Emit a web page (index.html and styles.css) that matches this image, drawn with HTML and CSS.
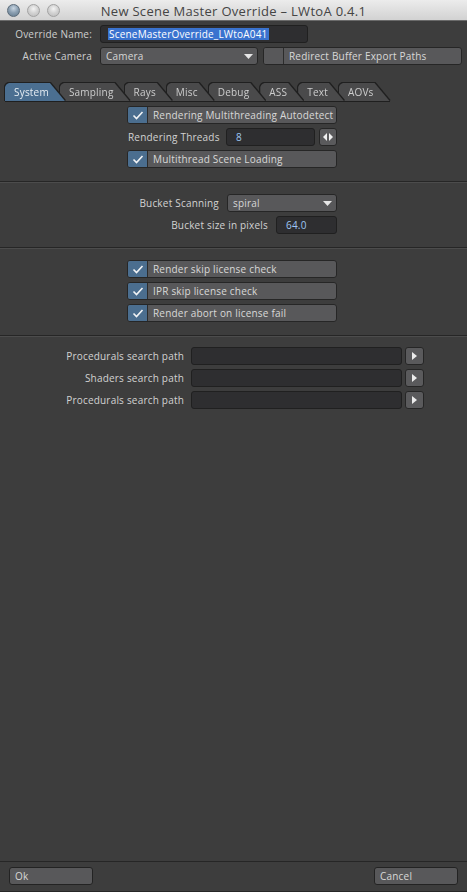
FILE: index.html
```html
<!DOCTYPE html>
<html>
<head>
<meta charset="utf-8">
<title>New Scene Master Override</title>
<link rel="stylesheet" href="styles.css">
</head>
<body>
<div class="window">
  <header class="titlebar">
    <div class="lights"><span class="light light-blue"></span><span class="light"></span><span class="light"></span></div>
    <div class="title">New Scene Master Override – LWtoA 0.4.1</div>
    <div class="title-pad"></div>
  </header>

  <div class="head-form">
    <div class="hrow">
      <span class="hlabel">Override Name:</span>
      <div class="field name-field"><span class="selection">SceneMasterOverride_LWtoA041</span></div>
    </div>
    <div class="hrow">
      <span class="hlabel">Active Camera</span>
      <div class="dropdown cam-drop"><span>Camera</span><svg class="darrow" width="9" height="5" viewBox="0 0 9 5"><path d="M0 0H9L4.5 5Z" fill="#e6e6e6"/></svg></div>
      <div class="check redirect"><span class="box box-off"></span><span class="ctext">Redirect Buffer Export Paths</span></div>
    </div>
  </div>

  <nav class="tabbar">
    <div class="tab tab-active t1"><span class="tab-shape">System</span></div>
    <div class="tab t2"><span class="tab-shape">Sampling</span></div>
    <div class="tab t3"><span class="tab-shape">Rays</span></div>
    <div class="tab t4"><span class="tab-shape">Misc</span></div>
    <div class="tab t5"><span class="tab-shape">Debug</span></div>
    <div class="tab t6"><span class="tab-shape">ASS</span></div>
    <div class="tab t7"><span class="tab-shape">Text</span></div>
    <div class="tab t8"><span class="tab-shape">AOVs</span></div>
  </nav>

  <section class="sec sec-sys">
    <div class="check wide"><span class="box"><svg width="12" height="9" viewBox="0 0 12 9"><path d="M1.5 4.5L4.5 7.5L10.5 1" fill="none" stroke="#f2f4f6" stroke-width="1.6"/></svg></span><span class="ctext">Rendering Multithreading Autodetect</span></div>
    <div class="threads">
      <span class="tlabel">Rendering Threads</span>
      <div class="field num-field">8</div>
      <div class="btn-small"><svg width="10" height="8" viewBox="0 0 10 8"><path d="M4 0V8L0 4Z M6 0V8L10 4Z" fill="#f0f0f0"/></svg></div>
    </div>
    <div class="check wide"><span class="box"><svg width="12" height="9" viewBox="0 0 12 9"><path d="M1.5 4.5L4.5 7.5L10.5 1" fill="none" stroke="#f2f4f6" stroke-width="1.6"/></svg></span><span class="ctext">Multithread Scene Loading</span></div>
  </section>
  <div class="sep"></div>

  <section class="sec sec-bucket">
    <div class="rrow">
      <span class="rlabel">Bucket Scanning</span>
      <div class="dropdown spiral-drop"><span>spiral</span><svg class="darrow" width="9" height="5" viewBox="0 0 9 5"><path d="M0 0H9L4.5 5Z" fill="#e6e6e6"/></svg></div>
    </div>
    <div class="rrow">
      <span class="rlabel">Bucket size in pixels</span>
      <div class="field bsize-field">64.0</div>
    </div>
  </section>
  <div class="sep"></div>

  <section class="sec sec-lic">
    <div class="check wide"><span class="box"><svg width="12" height="9" viewBox="0 0 12 9"><path d="M1.5 4.5L4.5 7.5L10.5 1" fill="none" stroke="#f2f4f6" stroke-width="1.6"/></svg></span><span class="ctext">Render skip license check</span></div>
    <div class="check wide"><span class="box"><svg width="12" height="9" viewBox="0 0 12 9"><path d="M1.5 4.5L4.5 7.5L10.5 1" fill="none" stroke="#f2f4f6" stroke-width="1.6"/></svg></span><span class="ctext">IPR skip license check</span></div>
    <div class="check wide"><span class="box"><svg width="12" height="9" viewBox="0 0 12 9"><path d="M1.5 4.5L4.5 7.5L10.5 1" fill="none" stroke="#f2f4f6" stroke-width="1.6"/></svg></span><span class="ctext">Render abort on license fail</span></div>
  </section>
  <div class="sep"></div>

  <section class="sec sec-paths">
    <div class="prow">
      <span class="plabel">Procedurals search path</span>
      <div class="field path-field"></div>
      <div class="btn-small pbtn"><svg width="5" height="8" viewBox="0 0 5 8"><path d="M0 0V8L5 4Z" fill="#ececec"/></svg></div>
    </div>
    <div class="prow">
      <span class="plabel">Shaders search path</span>
      <div class="field path-field"></div>
      <div class="btn-small pbtn"><svg width="5" height="8" viewBox="0 0 5 8"><path d="M0 0V8L5 4Z" fill="#ececec"/></svg></div>
    </div>
    <div class="prow">
      <span class="plabel">Procedurals search path</span>
      <div class="field path-field"></div>
      <div class="btn-small pbtn"><svg width="5" height="8" viewBox="0 0 5 8"><path d="M0 0V8L5 4Z" fill="#ececec"/></svg></div>
    </div>
  </section>

  <div class="spacer"></div>

  <footer class="footer">
    <div class="fbtns">
      <div class="button">Ok</div>
      <div class="button">Cancel</div>
    </div>
  </footer>
</div>
</body>
</html>
```

FILE: styles.css
```css
* { box-sizing: border-box; }
html, body { margin: 0; padding: 0; }
body {
  width: 467px;
  height: 892px;
  background: #3d3d3d;
  font-family: "Open Sans", "DejaVu Sans", sans-serif;
  font-size: 10px;
  letter-spacing: 0.2px;
  color: #d2d2d2;
  overflow: hidden;
}
.window {
  height: 892px;
  display: flex;
  flex-direction: column;
  background: #3d3d3d;
}

/* title bar */
.titlebar {
  height: 21px;
  flex: none;
  display: grid;
  grid-template-columns: 1fr auto 1fr;
  align-items: center;
  background: linear-gradient(#ececec, #d2d2d2);
  border-bottom: 1px solid #6a6a6a;
}
.lights { display: flex; gap: 7px; padding-left: 7px; }
.light {
  width: 13px; height: 13px; border-radius: 50%;
  background: radial-gradient(circle at 50% 35%, #f4f4f4 0%, #d4d4d4 45%, #b9b9b9 100%);
  border: 1px solid #a2a2a2;
}
.light-blue {
  background: radial-gradient(circle at 50% 30%, #c9d6e2 0%, #8ea2b4 45%, #60778a 100%);
  border-color: #5c6c7a;
}
.title {
  font-size: 13px;
  color: #444;
  letter-spacing: 0.3px;
  padding-top: 1px;
}

/* header form */
.head-form { padding-top: 4px; display: flex; flex-direction: column; gap: 4px; }
.hrow { display: flex; align-items: center; height: 18px; }
.hlabel { width: 92px; text-align: right; margin-right: 8px; color: #cfcfcf; }

.field {
  height: 18px;
  background: #2e2e30;
  border: 1px solid #202020;
  border-radius: 3px;
  display: flex;
  align-items: center;
}
.name-field { width: 208px; padding-left: 7px; }
.selection { background: #3a73cf; color: #fff; line-height: 12px; padding: 0 1px; }

.dropdown {
  height: 18px;
  background: #58585a;
  border: 1px solid #262626;
  border-radius: 3px;
  display: flex;
  align-items: center;
  justify-content: space-between;
  padding: 0 4px 0 5px;
  color: #d6d6d6;
}
.cam-drop { width: 158px; }
.darrow { display: block; }

.check {
  height: 18px;
  display: flex;
  background: #58585a;
  border: 1px solid #262626;
  border-radius: 3px;
  overflow: hidden;
  color: #d8d8d8;
}
.box {
  width: 20px; flex: none;
  background: #4b6e8f;
  border-right: 1px solid #2c2c2c;
  display: flex; align-items: center; justify-content: center;
}
.box-off { background: #58585a; }
.ctext { padding-left: 5px; line-height: 16px; white-space: nowrap; }
.redirect { width: 199px; margin-left: 5px; }
.wide { width: 210px; }

/* tabs */
.tabbar {
  margin-top: 18px;
  margin-left: 5px;
  align-self: flex-start;
  display: flex;
  border-bottom: 1px solid #1f1f1f;
}
.tab {
  filter: drop-shadow(1px 0 0 #202020) drop-shadow(-1px 0 0 #202020) drop-shadow(0 -1px 0 #202020);
  margin-left: -5px;
}
.tab.t1 { margin-left: 0; z-index: 8; }
.t2 { z-index: 7; } .t3 { z-index: 6; } .t4 { z-index: 5; } .t5 { z-index: 4; }
.t6 { z-index: 3; } .t7 { z-index: 2; } .t8 { z-index: 1; }
.tab-shape {
  display: block;
  height: 18px;
  line-height: 18px;
  padding: 0 16px 0 9px;
  background: #4a4a4b;
  color: #cdcdcd;
  clip-path: polygon(0 100%, 0 4px, 1px 2px, 2px 1px, 4px 0, calc(100% - 15px) 0, 100% 100%);
}
.tab-active .tab-shape { background: #4b6f91; color: #e6edf3; }

/* sections */
.sec { display: flex; flex-direction: column; gap: 4px; flex: none; }
.sep {
  flex: none;
  height: 2px;
  border-top: 1px solid #262626;
  border-bottom: 1px solid #4c4c4c;
}
.sec-sys { padding: 4px 0 13px 127px; }
.sec-bucket { padding: 11px 130px 13px 0; align-items: flex-end; }
.sec-lic { padding: 11px 0 13px 127px; }
.sec-paths { padding: 10px 0 0 0; }

.threads { display: flex; align-items: center; height: 18px; }
.tlabel { width: 99px; padding-left: 1px; }
.num-field { width: 89px; padding-left: 9px; color: #9ec6f2; }
.btn-small {
  width: 18px; height: 18px;
  margin-left: 4px;
  background: #5a5a5c;
  border: 1px solid #262626;
  border-radius: 3px;
  display: flex; align-items: center; justify-content: center;
}

.rrow { display: flex; align-items: center; height: 18px; }
.rlabel { margin-right: 8px; }
.spiral-drop { width: 110px; }
.bsize-field { width: 61px; padding-left: 9px; color: #9ec6f2; }

.prow { display: flex; align-items: center; height: 18px; }
.plabel { width: 184px; text-align: right; margin-right: 7px; }
.path-field { width: 211px; }
.pbtn { width: 19px; margin-left: 3px; }

.spacer { flex: 1; }

.footer {
  flex: none;
  border-top: 1px solid #262626;
  padding: 5px 9px 5px;
  border-bottom: 1px solid #262626;
  height: 31px;
}
.fbtns { display: flex; justify-content: space-between; }
.button {
  width: 84px;
  height: 18px;
  line-height: 16px;
  padding-left: 5px;
  background: #58585a;
  border: 1px solid #232323;
  border-radius: 3px;
  color: #d8d8d8;
}
```
